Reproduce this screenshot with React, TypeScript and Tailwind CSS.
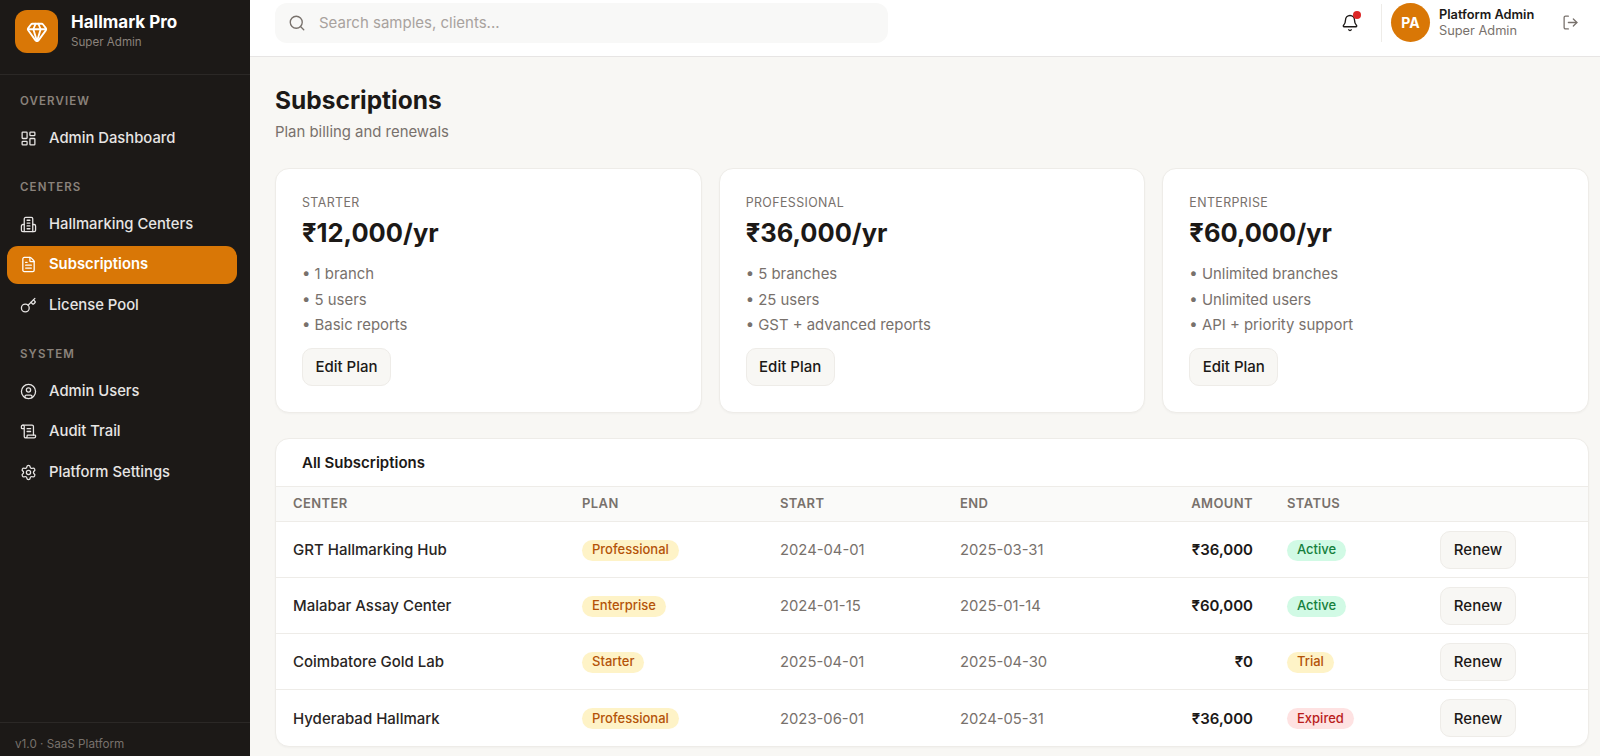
import { Bell, CircleUser, FileText, Gem, Key, LayoutDashboard, LogOut, ScrollText, Search, Settings } from 'lucide-react';

// tower with two low wings, lucide's current Building2 is drawn differently
function CenterIcon({ size = 17, strokeWidth = 1.8 }: { size?: number; strokeWidth?: number }) {
  return (
    <svg
      width={size}
      height={size}
      viewBox="0 0 24 24"
      fill="none"
      stroke="currentColor"
      strokeWidth={strokeWidth}
      strokeLinecap="round"
      strokeLinejoin="round"
    >
      <path d="M6 22V4a2 2 0 0 1 2-2h8a2 2 0 0 1 2 2v18Z" />
      <path d="M6 12H4a2 2 0 0 0-2 2v6a2 2 0 0 0 2 2h2" />
      <path d="M18 12h2a2 2 0 0 1 2 2v6a2 2 0 0 1-2 2h-2" />
      <path d="M10 6h4" />
      <path d="M10 10h4" />
      <path d="M10 14h4" />
      <path d="M10 18h4" />
    </svg>
  );
}

const navSections = [
  {
    title: 'OVERVIEW',
    items: [{ label: 'Admin Dashboard', icon: LayoutDashboard }],
  },
  {
    title: 'CENTERS',
    items: [
      { label: 'Hallmarking Centers', icon: CenterIcon },
      { label: 'Subscriptions', icon: FileText, active: true },
      { label: 'License Pool', icon: Key },
    ],
  },
  {
    title: 'SYSTEM',
    items: [
      { label: 'Admin Users', icon: CircleUser },
      { label: 'Audit Trail', icon: ScrollText },
      { label: 'Platform Settings', icon: Settings },
    ],
  },
];

const plans = [
  { name: 'STARTER', price: '₹12,000/yr', features: ['1 branch', '5 users', 'Basic reports'] },
  { name: 'PROFESSIONAL', price: '₹36,000/yr', features: ['5 branches', '25 users', 'GST + advanced reports'] },
  { name: 'ENTERPRISE', price: '₹60,000/yr', features: ['Unlimited branches', 'Unlimited users', 'API + priority support'] },
];

const rows = [
  { center: 'GRT Hallmarking Hub', plan: 'Professional', start: '2024-04-01', end: '2025-03-31', amount: '₹36,000', status: 'Active' },
  { center: 'Malabar Assay Center', plan: 'Enterprise', start: '2024-01-15', end: '2025-01-14', amount: '₹60,000', status: 'Active' },
  { center: 'Coimbatore Gold Lab', plan: 'Starter', start: '2025-04-01', end: '2025-04-30', amount: '₹0', status: 'Trial' },
  { center: 'Hyderabad Hallmark', plan: 'Professional', start: '2023-06-01', end: '2024-05-31', amount: '₹36,000', status: 'Expired' },
];

const statusStyles: Record<string, string> = {
  Active: 'bg-[#d1fae5] text-[#15803d]',
  Trial: 'bg-[#fef3c7] text-[#b45309]',
  Expired: 'bg-[#fee2e2] text-[#b91c1c]',
};

function Sidebar() {
  return (
    <aside className="flex h-full w-[250px] shrink-0 flex-col bg-[#1c1917]">
      <div className="flex h-[75px] shrink-0 items-start gap-[13px] border-b border-[#2b2826] pl-[15px] pt-[10px]">
        <div className="flex h-[43px] w-[43px] items-center justify-center rounded-[12px] bg-[#d97706] text-white">
          <Gem size={22} strokeWidth={2} />
        </div>
        <div className="pt-[2px]">
          <div className="text-[17px] font-bold leading-[20px] text-white">Hallmark Pro</div>
          <div className="mt-[2px] text-[11.6px] leading-[16px] text-[#8a827b]">Super Admin</div>
        </div>
      </div>
      <nav className="flex-1 pl-[7px] pr-[13px] pt-[19px]">
        {navSections.map((section) => (
          <div key={section.title} className="mb-[23px]">
            <div className="flex h-[16px] items-center pl-[13px] text-[11.5px] font-semibold tracking-[1.1px] text-[#8a827b]">
              {section.title}
            </div>
            <div className="mt-[9px] flex flex-col gap-[2.5px]">
              {section.items.map((item) => (
                <div
                  key={item.label}
                  className={`flex h-[38px] items-center gap-[12px] rounded-[11px] pl-[13px] text-[14.8px] ${
                    item.active ? 'bg-[#d97706] font-semibold text-white' : 'font-medium text-[#e7e5e4]'
                  }`}
                >
                  <item.icon size={17} strokeWidth={1.8} />
                  {item.label}
                </div>
              ))}
            </div>
          </div>
        ))}
      </nav>
      <div className="h-[34px] shrink-0 border-t border-[#2b2826] pl-[15px] pt-[13px] text-[11.7px] leading-[16px] text-[#78716c]">
        v1.0 · SaaS Platform
      </div>
    </aside>
  );
}

function Header() {
  return (
    <header className="flex h-[57px] shrink-0 items-start justify-between border-b border-[#e7e5e4] bg-white pl-[25px] pr-[21px] pt-[3px]">
      <div className="flex h-[40px] w-[613px] items-center gap-[13px] rounded-[12px] bg-[#f8f8f7] pl-[13px]">
        <Search size={18} className="text-[#78716c]" strokeWidth={1.8} />
        <span className="text-[15px] text-[#a8a29e]">Search samples, clients...</span>
      </div>
      <div className="flex items-center">
        <div className="relative mr-[22px] text-[#1c1917]">
          <Bell size={18} strokeWidth={1.8} />
          <span className="absolute right-[-2px] top-[-3px] h-[8px] w-[8px] rounded-full bg-[#dc2626]" />
        </div>
        <div className="mr-[9px] h-[38px] w-px bg-[#eeece8]" />
        <div className="flex h-[39px] w-[39px] items-center justify-center rounded-full bg-[#d97706] text-[14px] font-bold text-white">
          PA
        </div>
        <div className="ml-[9px] w-[123px]">
          <div className="text-[12.8px] font-semibold leading-[16px] text-[#1c1917]">Platform Admin</div>
          <div className="text-[12.8px] leading-[16px] text-[#78716c]">Super Admin</div>
        </div>
        <LogOut size={17} strokeWidth={1.8} className="text-[#78716c]" />
      </div>
    </header>
  );
}

function PlanCard({ plan }: { plan: (typeof plans)[number] }) {
  return (
    <div className="rounded-[14px] border border-[#eeece8] bg-white px-[26px] pb-[26px] pt-[25px] shadow-[0_1px_2px_rgba(0,0,0,0.03)]">
      <div className="text-[12.4px] leading-[18px] tracking-[0.4px] text-[#78716c]">{plan.name}</div>
      <div className="mt-[3px] text-[25.5px] font-bold leading-[36px] text-[#1c1917]">{plan.price}</div>
      <ul className="mt-[11px]">
        {plan.features.map((feature) => (
          <li key={feature} className="h-[25.5px] text-[14.9px] leading-[25.5px] text-[#78716c]">
            • {feature}
          </li>
        ))}
      </ul>
      <button className="mt-[9px] h-[38px] w-[89px] rounded-[10px] border border-[#eeece8] bg-[#f8f7f4] pt-[2px] text-[15px] font-medium text-[#1c1917]">
        Edit Plan
      </button>
    </div>
  );
}

function SubscriptionsTable() {
  const headCell = 'px-[17px] text-left text-[13px] font-semibold tracking-[0.4px] text-[#78716c]';
  return (
    <div className="mt-[25px] overflow-hidden rounded-[14px] border border-[#eeece8] bg-white shadow-[0_1px_2px_rgba(0,0,0,0.03)]">
      <div className="flex h-[48px] items-center border-b border-[#eeece8] pl-[26px] pt-[2px] text-[15px] font-semibold text-[#1c1917]">
        All Subscriptions
      </div>
      <table className="w-full table-fixed border-collapse">
        <colgroup>
          <col className="w-[289px]" />
          <col className="w-[198px]" />
          <col className="w-[180px]" />
          <col className="w-[180px]" />
          <col className="w-[147px]" />
          <col className="w-[153px]" />
          <col />
        </colgroup>
        <thead>
          <tr className="h-[35px] border-b border-[#eeece8] bg-[#fafaf9]">
            <th className={headCell}>CENTER</th>
            <th className={headCell}>PLAN</th>
            <th className={headCell}>START</th>
            <th className={headCell}>END</th>
            <th className={`${headCell} text-right`}>AMOUNT</th>
            <th className={headCell}>STATUS</th>
            <th />
          </tr>
        </thead>
        <tbody>
          {rows.map((row, i) => (
            <tr key={row.center} className={`h-[56px] ${i < rows.length - 1 ? 'border-b border-[#eeece8]' : ''}`}>
              <td className="px-[17px] pt-[2px] text-[15px] font-medium text-[#292524]">{row.center}</td>
              <td className="px-[17px] pt-[1px]">
                <span className="flex h-[21px] w-fit items-center rounded-full bg-[#fef3c7] px-[10px] text-[13px] font-medium text-[#b45309]">
                  {row.plan}
                </span>
              </td>
              <td className="px-[17px] pt-[2px] text-[14.8px] text-[#78716c]">{row.start}</td>
              <td className="px-[17px] pt-[2px] text-[14.8px] text-[#78716c]">{row.end}</td>
              <td className="px-[17px] pt-[2px] text-right text-[15px] font-semibold text-[#1c1917]">{row.amount}</td>
              <td className="px-[17px] pt-[1px]">
                <span className={`flex h-[21px] w-fit items-center rounded-full px-[10px] text-[13px] font-medium ${statusStyles[row.status]}`}>
                  {row.status}
                </span>
              </td>
              <td className="pl-[17px]">
                <button className="block h-[38px] w-[76px] rounded-[10px] border border-[#eeece8] bg-[#f8f7f4] pt-[2px] text-[15px] font-medium text-[#1c1917]">
                  Renew
                </button>
              </td>
            </tr>
          ))}
        </tbody>
      </table>
    </div>
  );
}

export default function App() {
  return (
    <div className="flex h-screen overflow-hidden bg-[#f8f7f4] font-['Inter',sans-serif]">
      <Sidebar />
      <div className="flex min-w-0 flex-1 flex-col">
        <Header />
        <main className="flex-1 overflow-hidden pl-[25px] pr-[11px] pt-[27px]">
          <h1 className="text-[24.5px] font-bold leading-[32px] text-[#1c1917]">Subscriptions</h1>
          <p className="mt-[6px] text-[14.9px] leading-[20px] text-[#78716c]">Plan billing and renewals</p>
          <div className="mt-[26px] grid grid-cols-3 gap-[17px]">
            {plans.map((plan) => (
              <PlanCard key={plan.name} plan={plan} />
            ))}
          </div>
          <SubscriptionsTable />
        </main>
      </div>
    </div>
  );
}
